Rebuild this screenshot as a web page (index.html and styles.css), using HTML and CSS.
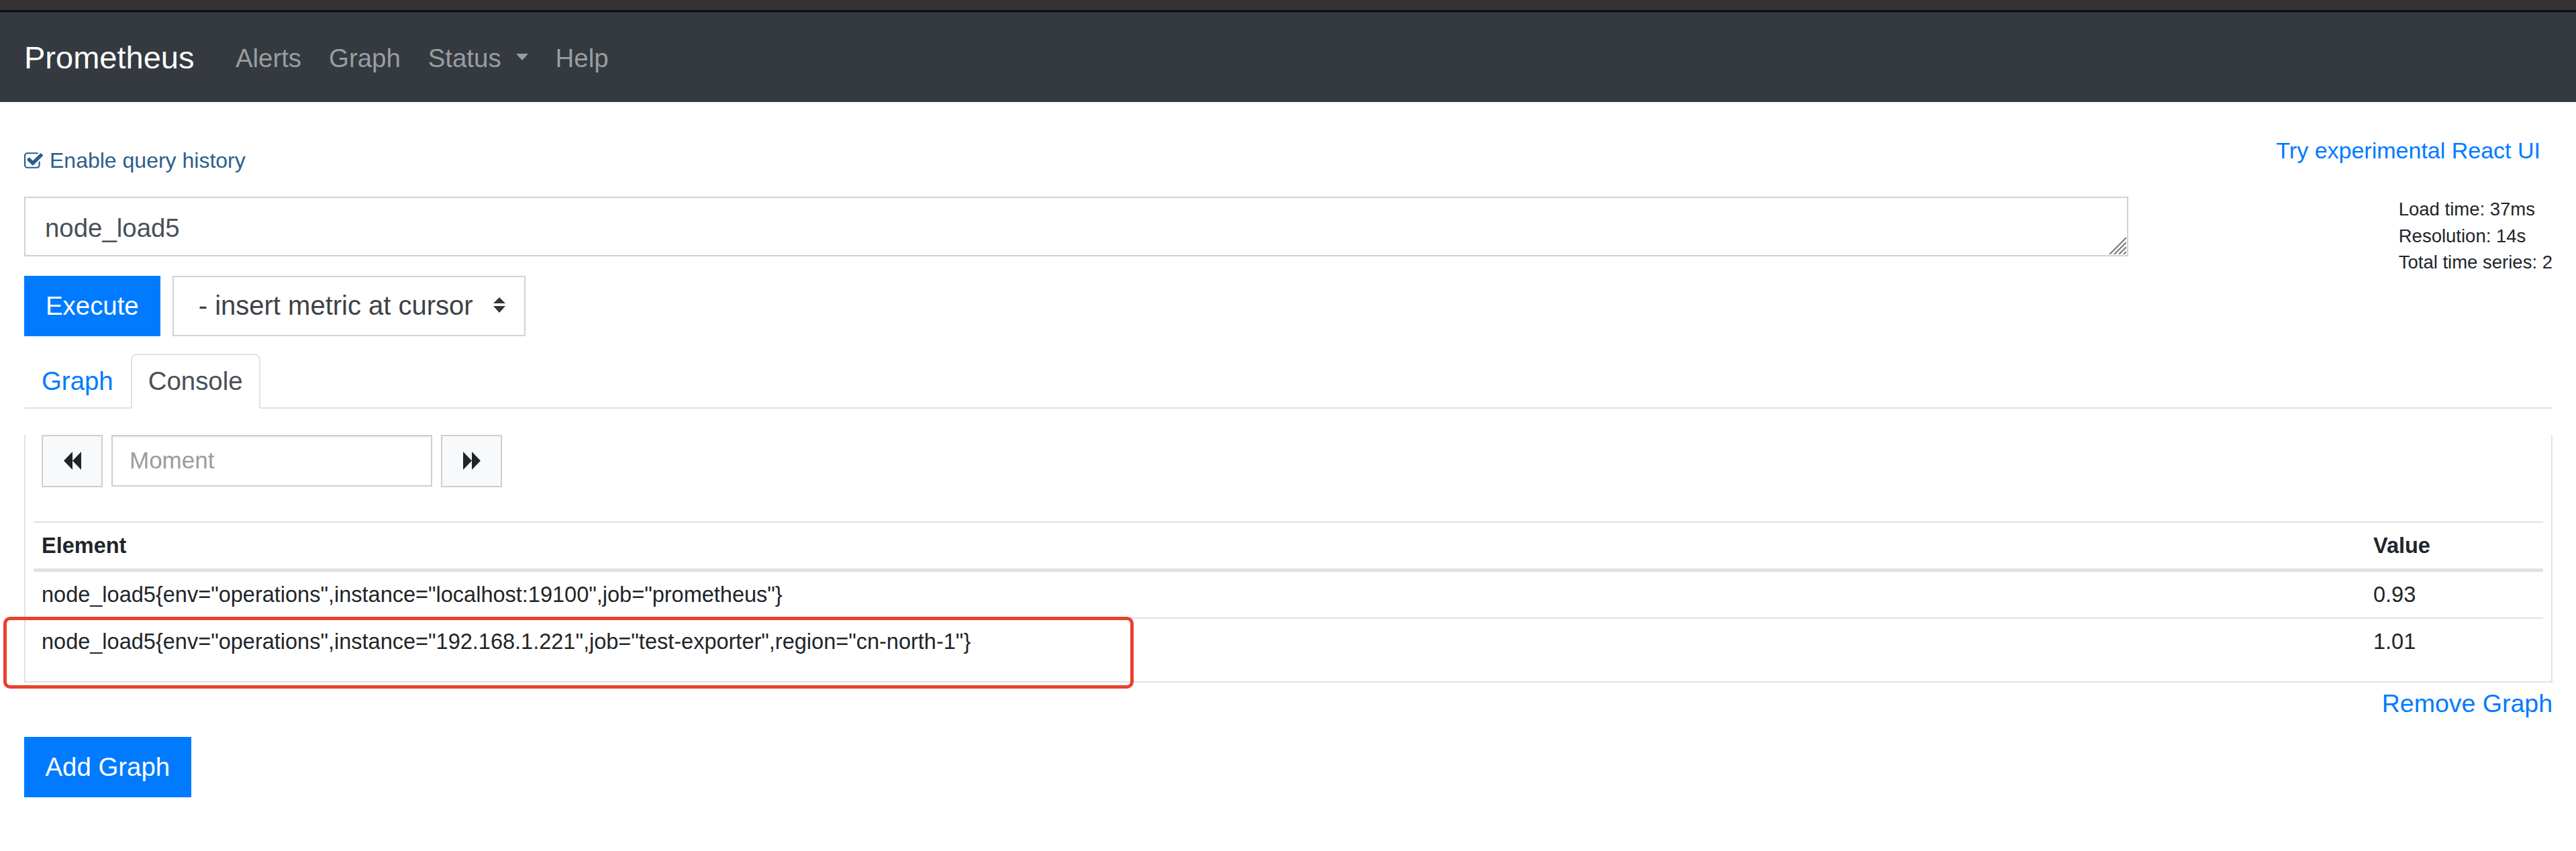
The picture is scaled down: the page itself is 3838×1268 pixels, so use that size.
FILE: index.html
```html
<!DOCTYPE html>
<html lang="en">
<head>
<meta charset="utf-8">
<title>Prometheus Time Series Collection and Processing Server</title>
<link rel="stylesheet" href="styles.css">
</head>
<body>
<div class="chrome"></div>
<nav class="navbar">
  <a class="brand" href="#">Prometheus</a>
  <ul class="nav-links">
    <li><a href="#">Alerts</a></li>
    <li><a href="#">Graph</a></li>
    <li><a href="#">Status<span class="caret"></span></a></li>
    <li><a href="#">Help</a></li>
  </ul>
</nav>
<main class="container">
  <div class="top-row">
    <label class="query-history">
      <svg class="check-icon" viewBox="64 128 1664 1408" aria-hidden="true"><path d="M1472 930v318q0 119-84.5 203.5t-203.5 84.5h-832q-119 0-203.5-84.5t-84.5-203.5v-832q0-119 84.5-203.5t203.5-84.5h832q63 0 117 25 15 7 18 23 3 17-9 29l-49 49q-10 10-23 10-3 0-9-2-23-6-45-6h-832q-66 0-113 47t-47 113v832q0 66 47 113t113 47h832q66 0 113-47t47-113v-254q0-13 9-22l64-64q10-10 23-10 6 0 12 3 20 8 20 29zm231-489l-814 814q-24 24-57 24t-57-24l-430-430q-24-24-24-57t24-57l110-110q24-24 57-24t57 24l263 263 647-647q24-24 57-24t57 24l110 110q24 24 24 57t-24 57z"/></svg>
      <span>Enable query history</span>
    </label>
    <a class="react-link" href="#">Try experimental React UI</a>
  </div>

  <div class="query-row">
    <div class="query-input">
      <textarea class="expr" spellcheck="false">node_load5</textarea>
      <svg class="grip" viewBox="0 0 26 26" aria-hidden="true">
        <line x1="26" y1="1" x2="1" y2="26"/>
        <line x1="26" y1="8" x2="8" y2="26"/>
        <line x1="26" y1="15" x2="15" y2="26"/>
        <line x1="26" y1="22" x2="22" y2="26"/>
      </svg>
    </div>
    <div class="eval-stats">
      <div>Load time: 37ms</div>
      <div>Resolution: 14s</div>
      <div>Total time series: 2</div>
    </div>
  </div>

  <div class="exec-row">
    <button class="btn">Execute</button>
    <div class="metric-select">
      <span>- insert metric at cursor</span>
      <svg class="updown" viewBox="0 0 18 23" aria-hidden="true">
        <polygon points="0,9 9,0 18,9"/>
        <polygon points="0,13 18,13 9,23"/>
      </svg>
    </div>
  </div>

  <ul class="tabs">
    <li><a class="tab" href="#">Graph</a></li>
    <li><a class="tab active" href="#">Console</a></li>
  </ul>
  <div class="tab-panel">
    <div class="moment-row">
      <button class="icon-btn" aria-label="back">
        <svg viewBox="0 0 26 27" aria-hidden="true"><polygon points="0,13.5 13,0 13,27"/><polygon points="13,13.5 26,0 26,27"/></svg>
      </button>
      <input class="moment-input" type="text" placeholder="Moment">
      <button class="icon-btn" aria-label="forward">
        <svg viewBox="0 0 26 27" aria-hidden="true"><polygon points="0,0 13,13.5 0,27"/><polygon points="13,0 26,13.5 13,27"/></svg>
      </button>
    </div>
    <table class="data-table">
      <thead>
        <tr><th>Element</th><th class="col-value">Value</th></tr>
      </thead>
      <tbody>
        <tr><td>node_load5{env="operations",instance="localhost:19100",job="prometheus"}</td><td>0.93</td></tr>
        <tr><td>node_load5{env="operations",instance="192.168.1.221",job="test-exporter",region="cn-north-1"}</td><td>1.01</td></tr>
      </tbody>
    </table>
  </div>
  <div class="remove-row"><a href="#">Remove Graph</a></div>
  <button class="btn add-graph">Add Graph</button>
</main>
<div class="annotation"></div>
</body>
</html>
```

FILE: styles.css
```css
* { box-sizing: border-box; }

html, body { margin: 0; padding: 0; }

body {
  position: relative;
  min-height: 1268px;
  font-family: "Liberation Sans", Arial, Helvetica, sans-serif;
  color: #212529;
  background: #fff;
}

.chrome {
  height: 18px;
  background: #333335;
  border-bottom: 3px solid #0c0d10;
}

/* navbar */
.navbar {
  height: 134px;
  background: #343a40;
  display: flex;
  align-items: center;
  padding: 3px 36px 0;
}

.brand {
  font-size: 47px;
  line-height: 1.5;
  color: #fff;
  text-decoration: none;
  margin-right: 41px;
}

.nav-links {
  display: flex;
  list-style: none;
  margin: 0;
  padding: 0;
}

.nav-links a {
  display: block;
  padding: 0 20.5px;
  font-size: 38.4px;
  line-height: 1.5;
  color: #9a9da0;
  text-decoration: none;
}

.caret {
  display: inline-block;
  margin-left: 22px;
  vertical-align: .25em;
  border-top: 10px solid #9a9da0;
  border-left: 9.5px solid transparent;
  border-right: 9.5px solid transparent;
}

/* page */
.container {
  padding: 0 35px 0 36px;
}

.top-row {
  display: flex;
  justify-content: space-between;
  align-items: flex-start;
  height: 140px;
  padding-top: 50px;
}

.query-history {
  display: flex;
  align-items: center;
  margin-top: 17px;
  font-size: 32px;
  line-height: 40px;
  color: #2c5e8c;
}

.check-icon {
  width: 28px;
  height: 24px;
  margin-right: 10px;
  fill: currentColor;
}

.react-link {
  font-size: 34px;
  line-height: 44px;
  color: #007bff;
  text-decoration: none;
  margin-right: 18px;
}

.query-row {
  display: flex;
  align-items: flex-start;
}

.query-input {
  position: relative;
  width: 3135px;
  margin-top: 1px;
}

.expr {
  display: block;
  width: 100%;
  height: 89px;
  margin: 0;
  border: 2px solid #cfd2d6;
  border-radius: 0;
  padding: 16px 29px 0;
  font-family: inherit;
  font-size: 38.4px;
  line-height: 57px;
  color: #495057;
  resize: none;
  outline: none;
  overflow: hidden;
}

.grip {
  position: absolute;
  right: 3px;
  bottom: 3px;
  width: 26px;
  height: 26px;
  stroke: #7a7a7a;
  stroke-width: 2.2;
}

.eval-stats {
  margin-left: auto;
  font-size: 27.5px;
  line-height: 39.6px;
  color: #212529;
}

.exec-row {
  display: flex;
  gap: 18px;
  height: 90px;
}

.btn {
  height: 90px;
  margin: 0;
  padding: 0 32px;
  border: 0;
  border-radius: 0;
  background: #007bff;
  color: #fff;
  font-family: inherit;
  font-size: 38.4px;
  line-height: 1.5;
}

.metric-select {
  width: 526px;
  height: 90px;
  display: flex;
  align-items: center;
  justify-content: space-between;
  padding: 0 28px 0 37px;
  border: 2px solid #d0d2d5;
  font-size: 40px;
  color: #3d4247;
}

.updown {
  width: 18px;
  height: 23px;
  fill: #33373b;
  margin-bottom: 2px;
}

/* tabs */
.tabs {
  display: flex;
  list-style: none;
  margin: 26px 0 0;
  padding: 0;
  height: 82px;
  border-bottom: 2px solid #dee2e6;
}

.tab {
  display: flex;
  align-items: center;
  height: 82px;
  margin-bottom: -2px;
  padding: 0 24px;
  border: 2px solid transparent;
  border-radius: 9px 9px 0 0;
  font-size: 38.4px;
  color: #007bff;
  text-decoration: none;
}

.tab.active {
  color: #495057;
  background: #fff;
  border-color: #dee2e6 #dee2e6 #fff;
}

.tab-panel {
  border: 2px solid #dee2e6;
  border-top: 0;
  padding: 0 12px;
}

.moment-row {
  display: flex;
  gap: 13px;
  height: 78px;
  margin: 39px 12px 0;
}

.icon-btn {
  width: 91px;
  height: 78px;
  display: flex;
  align-items: center;
  justify-content: center;
  padding: 0;
  border: 2px solid #cdcfd2;
  background: #f8f9fa;
}

.icon-btn svg {
  width: 26px;
  height: 27px;
  fill: #212529;
}

.moment-input {
  width: 478px;
  height: 77px;
  margin: 0;
  padding: 0 25px;
  border: 2px solid #cdcfd2;
  box-shadow: inset 0 2px 2px rgba(0, 0, 0, .07);
  font-family: inherit;
  font-size: 35px;
  color: #495057;
  outline: none;
}

.moment-input::placeholder {
  color: #9c9c9c;
}

.data-table {
  width: 100%;
  margin: 51px 0 25px;
  border-collapse: collapse;
  font-size: 32.5px;
  line-height: 50px;
}

.data-table th,
.data-table td {
  padding: 9px 12px;
  border-top: 2px solid #dee2e6;
  text-align: left;
  vertical-align: top;
  white-space: nowrap;
}

.data-table thead th {
  border-bottom: 5px solid #dee2e6;
  font-weight: bold;
}

.data-table .col-value {
  width: 265px;
}

.remove-row {
  margin-top: 3px;
  text-align: right;
  font-size: 37.5px;
  line-height: 56px;
}

.remove-row a {
  color: #007bff;
  text-decoration: none;
}

.add-graph {
  display: block;
  margin-top: 22px;
  padding: 0 31.5px;
}

/* red annotation rectangle drawn over the second result row */
.annotation {
  position: absolute;
  left: 5px;
  top: 919px;
  width: 1684px;
  height: 107px;
  border: 5px solid #e8412c;
  border-radius: 10px;
  pointer-events: none;
}
```
